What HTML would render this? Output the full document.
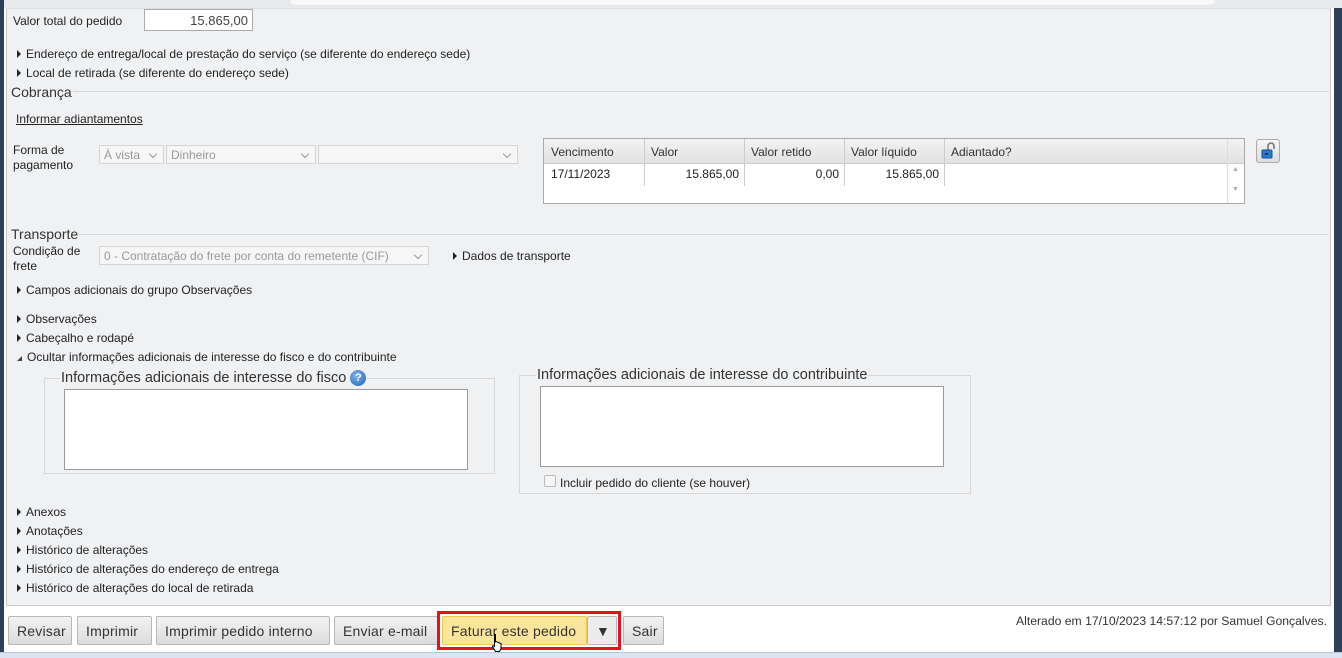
<!DOCTYPE html>
<html><head><meta charset="utf-8"><style>
*{box-sizing:border-box;margin:0;padding:0}
body{width:1342px;height:658px;overflow:hidden;background:#fff;font-family:"Liberation Sans",Tahoma,sans-serif;font-size:12px;color:#222;position:relative}
.a{position:absolute;white-space:nowrap}
.tri{display:inline-block;width:0;height:0;border-left:4px solid #222;border-top:4px solid transparent;border-bottom:4px solid transparent;margin-right:5px;vertical-align:0}
.sel{position:absolute;height:19px;border:1px solid #d4d4d4;background:#f6f6f6;color:#999;padding:2px 4px;font-size:12px}
.sel:after{content:"";position:absolute;right:7px;top:5px;width:5px;height:5px;border-right:1.5px solid #999;border-bottom:1.5px solid #999;transform:rotate(45deg)}
.btn{position:absolute;top:616px;height:29px;border:1px solid #b8b8b8;border-radius:2px;background:linear-gradient(#f2f2f2,#dcdcdc);font-size:14px;letter-spacing:0.2px;color:#333;padding:6px 8px 0;white-space:nowrap}
.ta{position:absolute;background:#fff;border:1px solid #9a9a9a}
.fs{position:absolute;border:1px solid #d8d8d8}
.leg{position:absolute;background:#f0f1f3;font-size:14px;color:#333;padding:0 1px}
</style></head><body>
<div class="a" style="left:0;top:0;width:1342px;height:8px;background:#e9eaec"></div>
<div class="a" style="left:290px;top:0;width:925px;height:5px;background:#f8f8f8;border-radius:0 0 6px 6px"></div>
<div class="a" style="left:0;top:0;width:4px;height:652px;background:#2c4059"></div>
<div class="a" style="left:1334px;top:8px;width:8px;height:644px;background:#2c4059"></div>
<div class="a" style="left:6px;top:8px;width:1325px;height:598px;background:#f0f1f3;border:1px solid #c8c8c8;border-top-color:#ddd"></div>
<div class="a" style="left:0;top:652px;width:1342px;height:6px;background:#dae5f1;border-top:1px solid #b9c7d6"></div>

<div class="a" style="left:13px;top:14px">Valor total do pedido</div>
<div class="a" style="left:144px;top:9px;width:109px;height:22px;background:#fff;border:1px solid #aaa;text-align:right;padding:3px 4px;font-size:13px;color:#444">15.865,00</div>
<div class="a" style="left:17px;top:47px"><span class="tri"></span>Endereço de entrega/local de prestação do serviço (se diferente do endereço sede)</div>
<div class="a" style="left:17px;top:66px"><span class="tri"></span>Local de retirada (se diferente do endereço sede)</div>
<div class="a" style="left:9px;top:91px;width:1320px;height:1px;background:#d8d8d8"></div>
<div class="leg" style="left:10px;top:84px">Cobrança</div>
<div class="a" style="left:16px;top:112px;text-decoration:underline">Informar adiantamentos</div>
<div class="a" style="left:13px;top:143px;line-height:15px">Forma de<br>pagamento</div>
<div class="sel" style="left:99px;top:145px;width:65px">À vista</div>
<div class="sel" style="left:166px;top:145px;width:150px">Dinheiro</div>
<div class="sel" style="left:318px;top:145px;width:200px"></div>

<div class="a" style="left:543px;top:138px;width:702px;height:66px;border:1px solid #aaa;background:#fff"></div>
<div class="a" style="left:544px;top:139px;width:700px;height:25px;background:linear-gradient(#f2f2f2,#e2e2e2);border-bottom:1px solid #ccc"></div>
<div class="a" style="left:644px;top:139px;width:1px;height:47px;background:#ccc"></div>
<div class="a" style="left:744px;top:139px;width:1px;height:47px;background:#ccc"></div>
<div class="a" style="left:844px;top:139px;width:1px;height:47px;background:#ccc"></div>
<div class="a" style="left:944px;top:139px;width:1px;height:47px;background:#ccc"></div>
<div class="a" style="left:1227px;top:139px;width:1px;height:64px;background:#ddd"></div>
<div class="a" style="left:551px;top:145px;color:#333">Vencimento</div>
<div class="a" style="left:651px;top:145px;color:#333">Valor</div>
<div class="a" style="left:751px;top:145px;color:#333">Valor retido</div>
<div class="a" style="left:851px;top:145px;color:#333">Valor líquido</div>
<div class="a" style="left:951px;top:145px;color:#333">Adiantado?</div>
<div class="a" style="left:551px;top:167px">17/11/2023</div>
<div class="a" style="left:645px;top:167px;width:94px;text-align:right">15.865,00</div>
<div class="a" style="left:745px;top:167px;width:94px;text-align:right">0,00</div>
<div class="a" style="left:845px;top:167px;width:94px;text-align:right">15.865,00</div>
<div class="a" style="left:1232px;top:166px;font-size:7px;color:#aaa">▲</div>
<div class="a" style="left:1232px;top:186px;font-size:7px;color:#aaa">▼</div>
<div class="a" style="left:1256px;top:139px;width:24px;height:24px;border:1px solid #aaa;border-radius:3px;background:linear-gradient(#f6f6f6,#ddd)">
<svg width="22" height="22" viewBox="0 0 22 22"><path d="M11 10V6a3 3 0 0 1 6 0v3" fill="none" stroke="#777" stroke-width="1.6"/><rect x="5" y="10" width="10" height="8" rx="1" fill="#2a7bd0" stroke="#1a4f8a"/><rect x="8" y="13" width="3" height="2" fill="#0d2d55"/></svg></div>

<div class="a" style="left:9px;top:234px;width:1320px;height:1px;background:#d8d8d8"></div>
<div class="leg" style="left:10px;top:226px">Transporte</div>
<div class="a" style="left:13px;top:244px;line-height:15px">Condição de<br>frete</div>
<div class="sel" style="left:99px;top:246px;width:330px">0 - Contratação do frete por conta do remetente (CIF)</div>
<div class="a" style="left:453px;top:249px"><span class="tri"></span>Dados de transporte</div>
<div class="a" style="left:17px;top:283px"><span class="tri"></span>Campos adicionais do grupo Observações</div>
<div class="a" style="left:17px;top:312px"><span class="tri"></span>Observações</div>
<div class="a" style="left:17px;top:331px"><span class="tri"></span>Cabeçalho e rodapé</div>
<div class="a" style="left:17px;top:350px"><span style="display:inline-block;width:0;height:0;border-right:5px solid #444;border-top:5px solid transparent;margin-right:5px"></span>Ocultar informações adicionais de interesse do fisco e do contribuinte</div>

<div class="fs" style="left:44px;top:378px;width:451px;height:96px"></div>
<div class="leg" style="left:60px;top:370px;font-size:14.5px">Informações adicionais de interesse do fisco <span style="display:inline-block;width:16px;height:16px;border-radius:50%;background:radial-gradient(circle at 40% 35%,#7fb3ee,#1f5fb5);color:#fff;font-weight:bold;font-size:11px;text-align:center;line-height:16px;vertical-align:1px">?</span></div>
<div class="ta" style="left:64px;top:389px;width:404px;height:81px"></div>
<div class="fs" style="left:519px;top:375px;width:452px;height:119px"></div>
<div class="leg" style="left:536px;top:367px;font-size:14.5px">Informações adicionais de interesse do contribuinte</div>
<div class="ta" style="left:540px;top:386px;width:404px;height:81px"></div>
<div class="a" style="left:544px;top:475px;width:12px;height:12px;border:1px solid #bbb;background:#f6f6f6;border-radius:2px"></div>
<div class="a" style="left:560px;top:476px">Incluir pedido do cliente (se houver)</div>

<div class="a" style="left:17px;top:505px"><span class="tri"></span>Anexos</div>
<div class="a" style="left:17px;top:524px"><span class="tri"></span>Anotações</div>
<div class="a" style="left:17px;top:543px"><span class="tri"></span>Histórico de alterações</div>
<div class="a" style="left:17px;top:562px"><span class="tri"></span>Histórico de alterações do endereço de entrega</div>
<div class="a" style="left:17px;top:581px"><span class="tri"></span>Histórico de alterações do local de retirada</div>

<div class="btn" style="left:8px;width:64px">Revisar</div>
<div class="btn" style="left:77px;width:75px">Imprimir</div>
<div class="btn" style="left:156px;width:174px">Imprimir pedido interno</div>
<div class="btn" style="left:334px;width:104px">Enviar e-mail</div>
<div class="a" style="left:437px;top:611px;width:184px;height:39px;border:3px solid #e8101b"></div>
<div class="btn" style="left:442px;width:145px;background:#fbe59a;border-color:#e8c84e">Faturar este pedido</div>
<div class="btn" style="left:587px;width:30px;background:#ececec;padding-left:8px">▼</div>
<div class="btn" style="left:623px;width:41px">Sair</div>
<div class="a" style="left:1016px;top:614px;color:#333;font-size:12.2px">Alterado em 17/10/2023 14:57:12 por Samuel Gonçalves.</div>
<svg class="a" style="left:490px;top:633px" width="16" height="22" viewBox="0 0 16 22"><path d="M4 1.5c1 0 1.5.6 1.5 1.5v6l1-.3 1 .5 1 .3 1 .5 1.5.5v5l-1.5 3H5.5l-3-5 .5-1 1.5.8V3c0-.9.5-1.5 1.5-1.5z" fill="#fff" stroke="#000" stroke-width="1"/></svg>
</body></html>
